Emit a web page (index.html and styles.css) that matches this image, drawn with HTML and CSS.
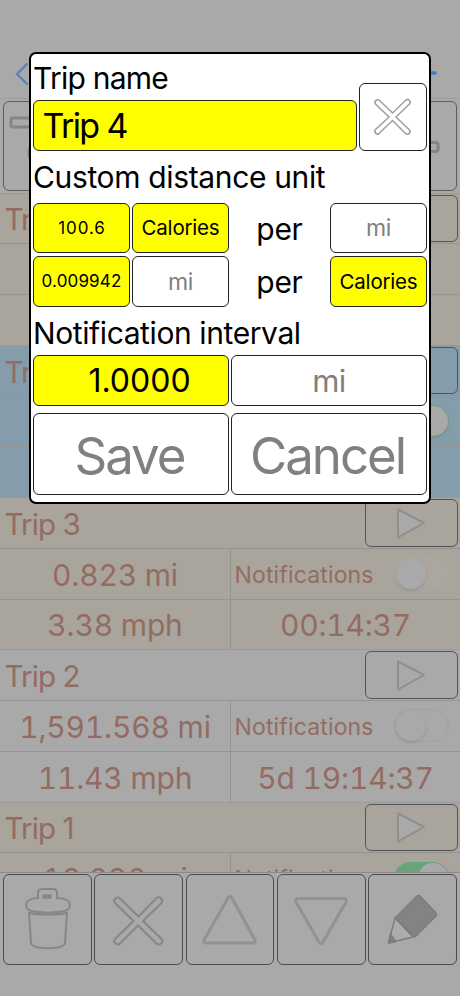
FILE: index.html
```html
<!DOCTYPE html>
<html lang="en">
<head>
<meta charset="utf-8">
<title>Trips</title>
<link rel="stylesheet" href="styles.css">
</head>
<body>
<main class="screen">
  <header class="nav">
    <svg class="back" viewBox="0 0 14 24"><path d="M12.5 1.5 2 12l10.500 10.500"/></svg>
    <svg class="gear" viewBox="0 0 20 30"><circle cx="11" cy="4" r="2"/><circle cx="11" cy="26" r="2"/><path d="M0 15h17"/></svg>
  </header>
  <section class="tools">
    <div class="tool"><svg viewBox="0 0 60 88"><rect x="7" y="16" width="40" height="9" rx="1.500"/><circle cx="37" cy="51" r="12"/></svg></div>
    <div class="tool"></div>
    <div class="tool tool-end"><svg viewBox="0 0 60 88"><rect x="14" y="40.500" width="28" height="9" rx="2"/></svg></div>
  </section>
  <section class="trips">
    <article class="trip tan">
      <div class="head"><span class="name">Trip 5</span><button class="play"></button></div>
      <div class="row"><div class="cell"></div><div class="cell"></div></div>
      <div class="row"><div class="cell"></div><div class="cell"></div></div>
    </article>
    <article class="trip blue">
      <div class="head"><span class="name">Trip 4</span><button class="play"></button></div>
      <div class="row"><div class="cell"></div><div class="cell note"><span></span><i class="switch lit"></i></div></div>
      <div class="row"><div class="cell"></div><div class="cell"></div></div>
    </article>
    <article class="trip tan">
      <div class="head"><span class="name">Trip 3</span><button class="play"><svg viewBox="0 0 32 34"><path d="M3 3.500 29 17 3 31.500z"/></svg></button></div>
      <div class="row"><div class="cell"><span>0.823 mi</span></div><div class="cell note"><span class="nt">Notifications</span><i class="switch"></i></div></div>
      <div class="row"><div class="cell"><span>3.38 mph</span></div><div class="cell"><span>00:14:37</span></div></div>
    </article>
    <article class="trip">
      <div class="head"><span class="name">Trip 2</span><button class="play"><svg viewBox="0 0 32 34"><path d="M3 3.500 29 17 3 31.500z"/></svg></button></div>
      <div class="row"><div class="cell"><span>1,591.568 mi</span></div><div class="cell note"><span class="nt">Notifications</span><i class="switch plain"></i></div></div>
      <div class="row"><div class="cell"><span>11.43 mph</span></div><div class="cell"><span>5d 19:14:37</span></div></div>
    </article>
    <article class="trip tan">
      <div class="head"><span class="name">Trip 1</span><button class="play"><svg viewBox="0 0 32 34"><path d="M3 3.500 29 17 3 31.500z"/></svg></button></div>
      <div class="row"><div class="cell"><span>18.230 mi</span></div><div class="cell note"><span class="nt">Notifications</span><i class="switch on"></i></div></div>
    </article>
  </section>
  <footer class="bar">
    <button><svg viewBox="0 0 89 91"><path d="M35 23v-5q0-4 4-4h11q4 0 4 4v5c8 0 13 3 13 7s-4 6-8 6.500c-9 1.500-19 1.500-28 0-4-.5-8-2.500-8-6.500s5-7 12-7zM26 37l2 31c0 7 34 7 34 0l2-31"/><path class="dark" d="M39.500 21.500h9"/><path d="M27 38c9 2 27 2 36 0"/></svg></button>
    <button><svg viewBox="0 0 89 91"><path d="M44.500 41.500 62.500 23q2.500-2 5 1 1.500 2 0 4L49 46l18.500 18q2 2.500-.5 4.500t-4.500 0L44 50.500 26 68.500q-2 2-4.500 0t-.5-4.500L39.500 46 21 28q-2-2.500.5-4.500t4.500 0z"/></svg></button>
    <button><svg viewBox="0 0 89 91"><path class="tri" d="M42 23q2-3 4 0l23 42q1 3-2 3H20q-3 0-2-3z"/></svg></button>
    <button><svg viewBox="0 0 89 91"><path class="tri" d="M42 67q2 3 4 0l23-40q1-3.500-2-3.500H21q-3 0-2 3.500z"/></svg></button>
    <button><svg class="pencil" viewBox="0 0 89 91"><path class="body" d="M27 43 49 21q1.500-1 3 0l16 17q1 1.500 0 3L47 62z"/><path class="wood" d="m27 43-6.500 25L45 62z"/><path class="tip" d="m22.500 59.500 5.500 7-7.500 1.500z"/></svg></button>
  </footer>
</main>
<div class="dialog">
  <div class="top">
    <div class="titled"><h1>Trip name</h1><div class="field yellow wide"><span>Trip 4</span></div></div>
    <button class="field clear"><svg viewBox="0 0 67 67"><path d="M33.500 30 47 17q2-1.500 3.500.5t0 3.500L37 34l13.500 13q1.500 2-.5 3.500t-3.500 0L33.500 37.500 20 50.500q-2 1.500-3.500-.5t0-3.500L30 34 16.500 21q-1.500-2 .5-3.500t3.500 0z"/></svg></button>
  </div>
  <h1 class="t2">Custom distance unit</h1>
  <div class="units">
    <div class="field yellow"><span class="s1">100.6</span></div><div class="field yellow"><span class="cal">Calories</span></div><div class="per"><span>per</span></div><div class="field"><span class="mi">mi</span></div>
    <div class="field yellow"><span class="s2">0.009942</span></div><div class="field"><span class="mi">mi</span></div><div class="per"><span>per</span></div><div class="field yellow"><span class="cal">Calories</span></div>
  </div>
  <h1 class="t3">Notification interval</h1>
  <div class="pair"><div class="field yellow"><span class="int">1.0000</span></div><div class="field"><span class="mi big">mi</span></div></div>
  <div class="pair actions"><button class="field"><span>Save</span></button><button class="field"><span>Cancel</span></button></div>
</div>
</body>
</html>
```
FILE: styles.css
```css
* { box-sizing: border-box; }
body { margin: 0; font-family: Inter, "Liberation Sans", sans-serif; }
button { font: inherit; padding: 0; background: none; }
svg { display: block; fill: none; overflow: visible; }
span, h1 { white-space: nowrap; }
.screen { width: 460px; height: 996px; background: #a9a9a9; overflow: hidden; display: flex; flex-direction: column; color: #936c61; }
.nav { height: 99px; flex: none; border-bottom: 1px solid #9d9d9d; padding: 62px 22px 0 15px; display: flex; justify-content: space-between; }
.back { width: 14px; height: 24px; stroke: #5484b8; stroke-width: 2.3; }
.gear { width: 20px; height: 30px; margin-top: -4px; }
.gear circle { fill: #747474; }
.gear path { stroke: #3d7fc0; stroke-width: 3.500; stroke-linecap: round; }
.tools { height: 94.500px; flex: none; padding: 2px 3px; display: grid; grid-template-columns: repeat(3, 1fr); gap: 3px; border-bottom: 1px solid #9a9a9a; }
.tool { border: 1px solid #5c5c5c; border-radius: 6px; height: 90px; }
.tool svg { height: 88px; width: 60px; stroke: #858585; stroke-width: 3; }
.tool-end { display: flex; justify-content: flex-end; }
.tool-end svg { margin-right: 0; }
.trips { height: 679px; flex: none; overflow: hidden; border-bottom: 1px solid #8a8a8a; }
.trip { height: 152.300px; display: flex; flex-direction: column; border-bottom: 1px solid #9a9a9a; }
.tan { background: #a9a59c; }
.blue { background: #859dab; }
.head { height: 49.600px; flex: none; display: flex; align-items: center; justify-content: space-between; padding: 0 2.500px 0 4.500px; }
.name { font-size: 29.500px; letter-spacing: -.9px; padding-top: 2px; }
.play { width: 92.500px; height: 47.500px; border: 1px solid #555; border-radius: 6px; display: flex; align-items: center; justify-content: center; }
.play svg { width: 32px; height: 34px; stroke: #8f8f8f; stroke-width: 2; stroke-linejoin: round; }
.play path { fill: #a9a9a9; }
.row { height: 50.850px; flex: none; display: flex; border-top: 1px solid #949494; }
.cell { width: 230px; display: flex; align-items: center; justify-content: center; font-size: 30px; letter-spacing: -.2px; font-feature-settings: "tnum"; }
.cell > span { padding-top: 2px; }
.cell + .cell { border-left: 1px solid #949494; }
.note { justify-content: space-between; padding: 0 11px 0 3.500px; }
.cell .nt { font-size: 23px; letter-spacing: .15px; }
.switch { width: 55px; height: 33px; border-radius: 17px; flex: none; background: #aba7a0; }
.switch::before { content: ""; display: block; width: 30px; height: 30px; margin: 1.500px; border-radius: 50%; background: #a9a9a9; box-shadow: 0 2px 3px #85858580; }
.switch.plain { background: #a9a9a9; border: 1px solid #a1a1a1; }
.switch.plain::before { margin: .5px; }
.switch.on, .switch.lit { background: #6ba478; }
.switch.on::before, .switch.lit::before { margin-left: 23.500px; }
.bar { height: 93px; padding: 1px 3px 0; display: grid; grid-template-columns: repeat(5, minmax(0, 1fr)); gap: 2.500px; }
.bar button { height: 91.500px; border: 1px solid #4c4c4c; border-radius: 6px; display: flex; justify-content: center; }
.bar svg { width: 89px; height: 91px; flex: none; stroke: #878787; stroke-width: 2; }
.bar .tri { stroke-width: 3; stroke: #919191; }
.bar .dark { stroke-width: 4.500; }
.bar .pencil { stroke: #7c7c7c; stroke-width: 1.500; stroke-linejoin: round; }
.body, .tip { fill: #838383; }
.wood { fill: #acacac; }
.dialog { position: absolute; left: 29px; top: 52px; width: 402px; height: 452px; border: 2px solid #000; border-radius: 7px; background: #fff; color: #000; padding: 0 2px; }
.dialog h1 { margin: 0; font-weight: 400; font-size: 30px; line-height: 46px; height: 46px; }
.top { display: flex; gap: 2px; align-items: flex-end; height: 96.500px; }
.titled { width: 324px; }
.dialog .titled h1 { height: 47px; line-height: 50px; letter-spacing: -.75px; }
.field { border: 1.200px solid #222; border-radius: 6px; height: 50.500px; display: flex; align-items: center; justify-content: center; color: #808080; min-width: 0; }
.yellow { background: #ff0; color: #000; }
.wide { justify-content: flex-start; padding-left: 8.500px; font-size: 34px; letter-spacing: -1.600px; }
.clear { width: 67.500px; height: 67.500px; }
.clear svg { width: 67px; height: 67px; flex: none; stroke: #a2a2a2; stroke-width: 1.600; }
.dialog .t2 { height: 52px; line-height: 52px; letter-spacing: -.35px; }
.units { display: grid; grid-template-columns: 97px 97px 97px 97px; gap: 3px 2px; font-size: 20.500px; }
.per { display: flex; align-items: center; justify-content: center; font-size: 30px; letter-spacing: -.3px; padding-top: 2px; }
.s1, .s2 { font-size: 17px; }
.s1 { letter-spacing: .9px; padding-left: 1px; }
.s2 { letter-spacing: .15px; }
.cal { letter-spacing: -.2px; }
.dialog .t3 { height: 48.500px; line-height: 53px; letter-spacing: -.4px; }
.pair { display: grid; grid-template-columns: 1fr 1fr; gap: 2px; font-size: 32px; }
.int { padding-left: 17px; }
.actions { margin-top: 7.500px; font-size: 51px; }
.actions .field { height: 82px; padding: 2px 3px 0 0; }
.actions span { letter-spacing: -2px; }
.mi { font-size: 23px; letter-spacing: -.3px; padding-top: 1px; }
.big { font-size: 31px; letter-spacing: -.5px; }
```
